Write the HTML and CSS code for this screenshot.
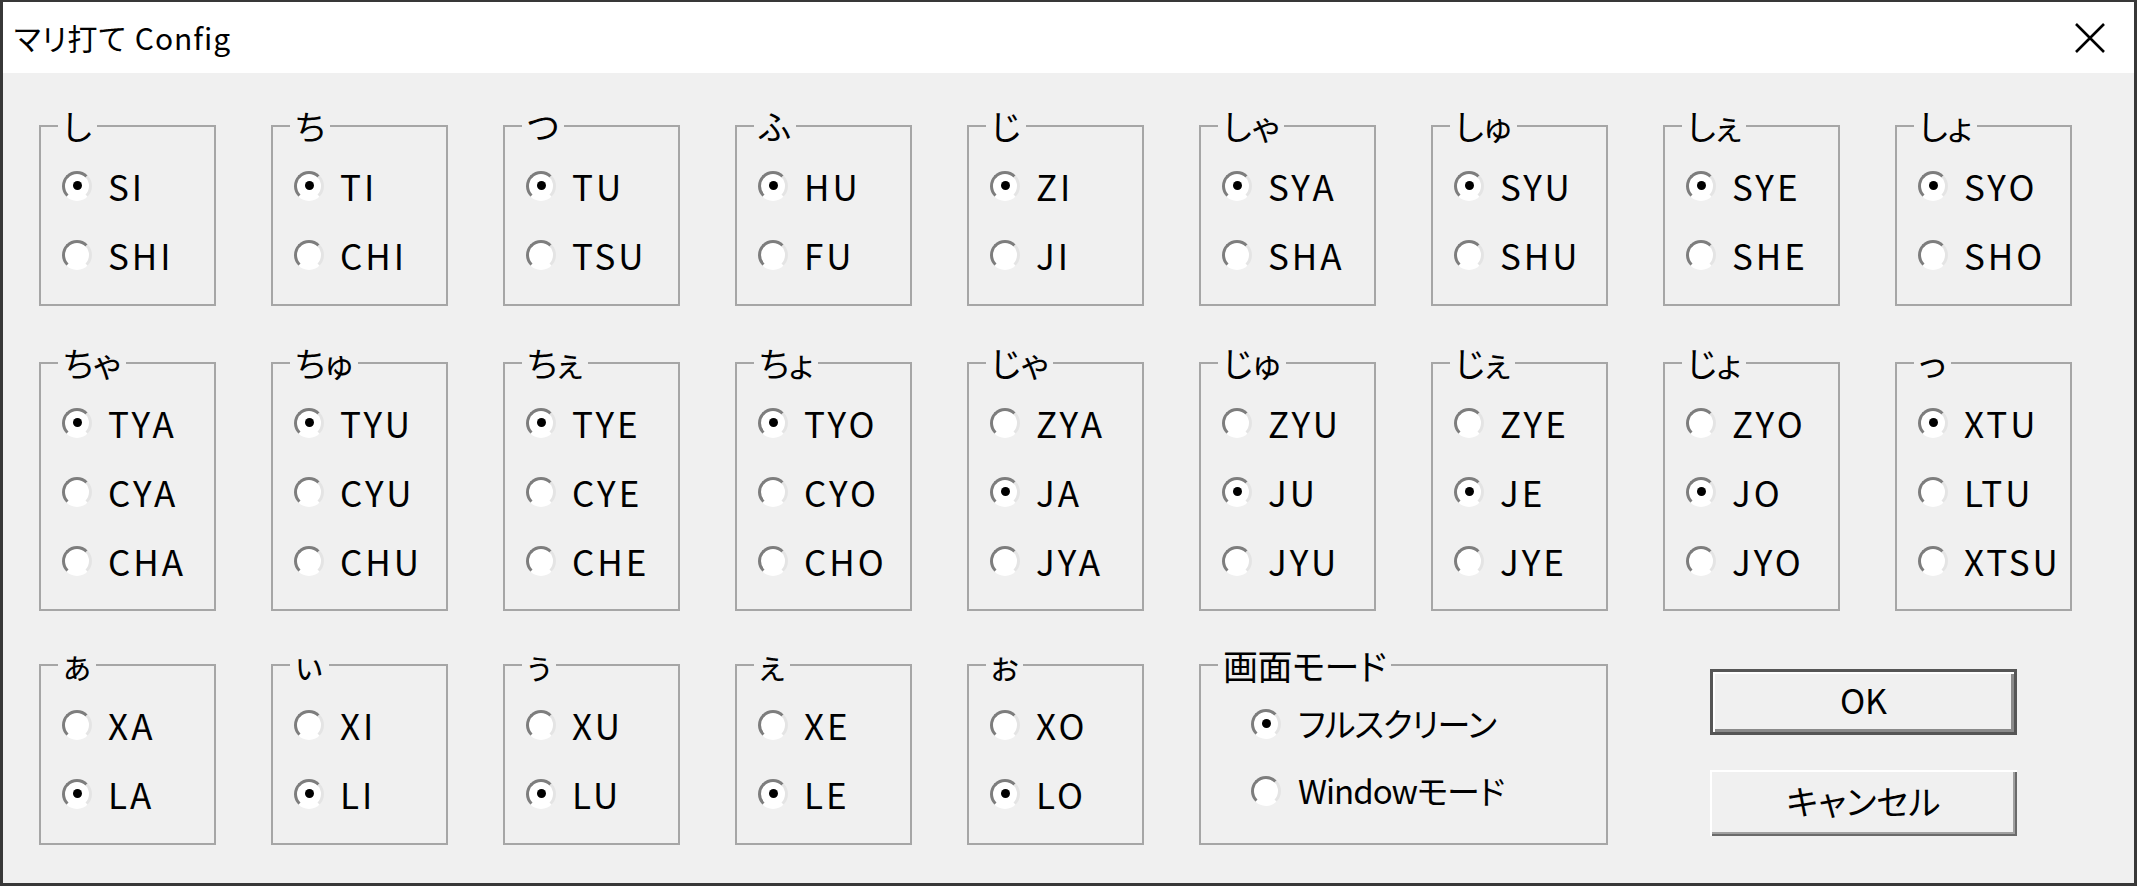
FILE: index.html
```html
<!DOCTYPE html>
<html lang="ja">
<head>
<meta charset="utf-8">
<title>マリ打て Config</title>
<link rel="stylesheet" href="styles.css">
</head>
<body>
<div class="window">
  <div class="titlebar">
    <span class="title">マリ打て Config</span>
    <svg class="close" viewBox="0 0 30 30" width="30" height="30"><path d="M1 1 L29 29 M29 1 L1 29" stroke="#000" stroke-width="2.6" fill="none"/></svg>
  </div>
  <div class="client">
    <div class="grid">
      <fieldset class="group"><legend>し</legend><div class="opts">
        <div class="opt"><span class="radio on"></span>SI</div>
        <div class="opt"><span class="radio"></span>SHI</div></div></fieldset>
      <fieldset class="group"><legend>ち</legend><div class="opts">
        <div class="opt"><span class="radio on"></span>TI</div>
        <div class="opt"><span class="radio"></span>CHI</div></div></fieldset>
      <fieldset class="group"><legend>つ</legend><div class="opts">
        <div class="opt"><span class="radio on"></span>TU</div>
        <div class="opt"><span class="radio"></span>TSU</div></div></fieldset>
      <fieldset class="group"><legend>ふ</legend><div class="opts">
        <div class="opt"><span class="radio on"></span>HU</div>
        <div class="opt"><span class="radio"></span>FU</div></div></fieldset>
      <fieldset class="group"><legend>じ</legend><div class="opts">
        <div class="opt"><span class="radio on"></span>ZI</div>
        <div class="opt"><span class="radio"></span>JI</div></div></fieldset>
      <fieldset class="group"><legend>しゃ</legend><div class="opts">
        <div class="opt"><span class="radio on"></span>SYA</div>
        <div class="opt"><span class="radio"></span>SHA</div></div></fieldset>
      <fieldset class="group"><legend>しゅ</legend><div class="opts">
        <div class="opt"><span class="radio on"></span>SYU</div>
        <div class="opt"><span class="radio"></span>SHU</div></div></fieldset>
      <fieldset class="group"><legend>しぇ</legend><div class="opts">
        <div class="opt"><span class="radio on"></span>SYE</div>
        <div class="opt"><span class="radio"></span>SHE</div></div></fieldset>
      <fieldset class="group"><legend>しょ</legend><div class="opts">
        <div class="opt"><span class="radio on"></span>SYO</div>
        <div class="opt"><span class="radio"></span>SHO</div></div></fieldset>

      <fieldset class="group r2"><legend>ちゃ</legend><div class="opts">
        <div class="opt"><span class="radio on"></span>TYA</div>
        <div class="opt"><span class="radio"></span>CYA</div>
        <div class="opt"><span class="radio"></span>CHA</div></div></fieldset>
      <fieldset class="group r2"><legend>ちゅ</legend><div class="opts">
        <div class="opt"><span class="radio on"></span>TYU</div>
        <div class="opt"><span class="radio"></span>CYU</div>
        <div class="opt"><span class="radio"></span>CHU</div></div></fieldset>
      <fieldset class="group r2"><legend>ちぇ</legend><div class="opts">
        <div class="opt"><span class="radio on"></span>TYE</div>
        <div class="opt"><span class="radio"></span>CYE</div>
        <div class="opt"><span class="radio"></span>CHE</div></div></fieldset>
      <fieldset class="group r2"><legend>ちょ</legend><div class="opts">
        <div class="opt"><span class="radio on"></span>TYO</div>
        <div class="opt"><span class="radio"></span>CYO</div>
        <div class="opt"><span class="radio"></span>CHO</div></div></fieldset>
      <fieldset class="group r2"><legend>じゃ</legend><div class="opts">
        <div class="opt"><span class="radio"></span>ZYA</div>
        <div class="opt"><span class="radio on"></span>JA</div>
        <div class="opt"><span class="radio"></span>JYA</div></div></fieldset>
      <fieldset class="group r2"><legend>じゅ</legend><div class="opts">
        <div class="opt"><span class="radio"></span>ZYU</div>
        <div class="opt"><span class="radio on"></span>JU</div>
        <div class="opt"><span class="radio"></span>JYU</div></div></fieldset>
      <fieldset class="group r2"><legend>じぇ</legend><div class="opts">
        <div class="opt"><span class="radio"></span>ZYE</div>
        <div class="opt"><span class="radio on"></span>JE</div>
        <div class="opt"><span class="radio"></span>JYE</div></div></fieldset>
      <fieldset class="group r2"><legend>じょ</legend><div class="opts">
        <div class="opt"><span class="radio"></span>ZYO</div>
        <div class="opt"><span class="radio on"></span>JO</div>
        <div class="opt"><span class="radio"></span>JYO</div></div></fieldset>
      <fieldset class="group r2"><legend>っ</legend><div class="opts">
        <div class="opt"><span class="radio on"></span>XTU</div>
        <div class="opt"><span class="radio"></span>LTU</div>
        <div class="opt"><span class="radio"></span>XTSU</div></div></fieldset>

      <fieldset class="group"><legend>ぁ</legend><div class="opts">
        <div class="opt"><span class="radio"></span>XA</div>
        <div class="opt"><span class="radio on"></span>LA</div></div></fieldset>
      <fieldset class="group"><legend>ぃ</legend><div class="opts">
        <div class="opt"><span class="radio"></span>XI</div>
        <div class="opt"><span class="radio on"></span>LI</div></div></fieldset>
      <fieldset class="group"><legend>ぅ</legend><div class="opts">
        <div class="opt"><span class="radio"></span>XU</div>
        <div class="opt"><span class="radio on"></span>LU</div></div></fieldset>
      <fieldset class="group"><legend>ぇ</legend><div class="opts">
        <div class="opt"><span class="radio"></span>XE</div>
        <div class="opt"><span class="radio on"></span>LE</div></div></fieldset>
      <fieldset class="group"><legend>ぉ</legend><div class="opts">
        <div class="opt"><span class="radio"></span>XO</div>
        <div class="opt"><span class="radio on"></span>LO</div></div></fieldset>
      <fieldset class="group mode"><legend>画面モード</legend><div class="opts">
        <div class="opt"><span class="radio on"></span>フルスクリーン</div>
        <div class="opt"><span class="radio"></span>Windowモード</div></div></fieldset>
      <div class="buttons">
        <button class="btn default">OK</button>
        <button class="btn">キャンセル</button>
      </div>
    </div>
  </div>
</div>
</body>
</html>
```
FILE: styles.css
```css
* { box-sizing: border-box; }
html, body { margin: 0; padding: 0; }
body {
  width: 2137px;
  height: 886px;
  overflow: hidden;
  background: #f0f0f0;
  font-family: "Noto Sans CJK JP", "Noto Sans", sans-serif;
  font-feature-settings: "palt";
  color: #000;
}
.window {
  width: 2137px;
  height: 886px;
  border: 3px solid #383838;
  border-top-width: 2px;
  display: flex;
  flex-direction: column;
  background: #f0f0f0;
}
.titlebar {
  height: 71px;
  flex: none;
  background: #fff;
  display: flex;
  align-items: center;
  justify-content: space-between;
  padding: 0 29px 0 11px;
}
.title {
  font-size: 30px;
  letter-spacing: 1px;
  line-height: 1;
  padding-bottom: 2px;
}
.close { display: block; }
.client {
  flex: 1;
  padding: 36px 0 0 36px;
}
.grid {
  display: grid;
  grid-template-columns: repeat(9, 177px);
  grid-template-rows: 197px 268px 197px;
  column-gap: 55px;
  row-gap: 37px;
}
.group {
  margin: 0;
  padding: 0 0 0 21px;
  border: 2px solid #a6a6a6;
  min-width: 0;
}
.group.r2 { margin-top: 3px; }
.group legend {
  margin-left: -4px;
  padding: 0 5px;
  font-size: 34px;
  line-height: 34px;
  height: 34px;
}
.opts { padding-top: 8px; }
.opt {
  display: flex;
  align-items: center;
  height: 69px;
  font-size: 35px;
  line-height: 35px;
  letter-spacing: 3px;
  white-space: nowrap;
}
.mode { grid-column: 6 / span 2; padding-left: 50px; }
.mode legend {
  margin-left: -33px;
  font-size: 35px;
  letter-spacing: -0.5px;
}
.mode .opt { height: 67px; font-size: 33px; letter-spacing: -1px; }
.radio {
  flex: none;
  width: 30px;
  height: 30px;
  border-radius: 50%;
  border: 3px solid;
  border-color: #7d7d7d #e4e4e4 #ffffff #7d7d7d;
  background: #fff;
  margin-right: 16px;
  display: flex;
  align-items: center;
  justify-content: center;
}
.mode .radio { margin-right: 17px; }
.radio.on::after {
  content: "";
  width: 9px;
  height: 9px;
  border-radius: 50%;
  background: #000;
}
.buttons {
  grid-column: 8 / span 2;
  display: flex;
  flex-direction: column;
  align-items: center;
  padding: 21px 8px 0 0;
  gap: 35px;
}
.btn {
  width: 307px;
  height: 66px;
  margin: 0;
  padding: 0 0 4px;
  font-family: inherit;
  font-feature-settings: "palt";
  font-size: 34px;
  line-height: 1;
  color: #000;
  background: #f0f0f0;
  border: none;
  box-shadow: inset 2px 2px 0 #ffffff, inset -2px -2px 0 #6a6a6a, inset -4px -4px 0 #a0a0a0;
}
.btn.default {
  border: 3px solid #555;
  box-shadow: inset 2px 2px 0 #ffffff, inset -3px -3px 0 #8a8a8a;
}
```
